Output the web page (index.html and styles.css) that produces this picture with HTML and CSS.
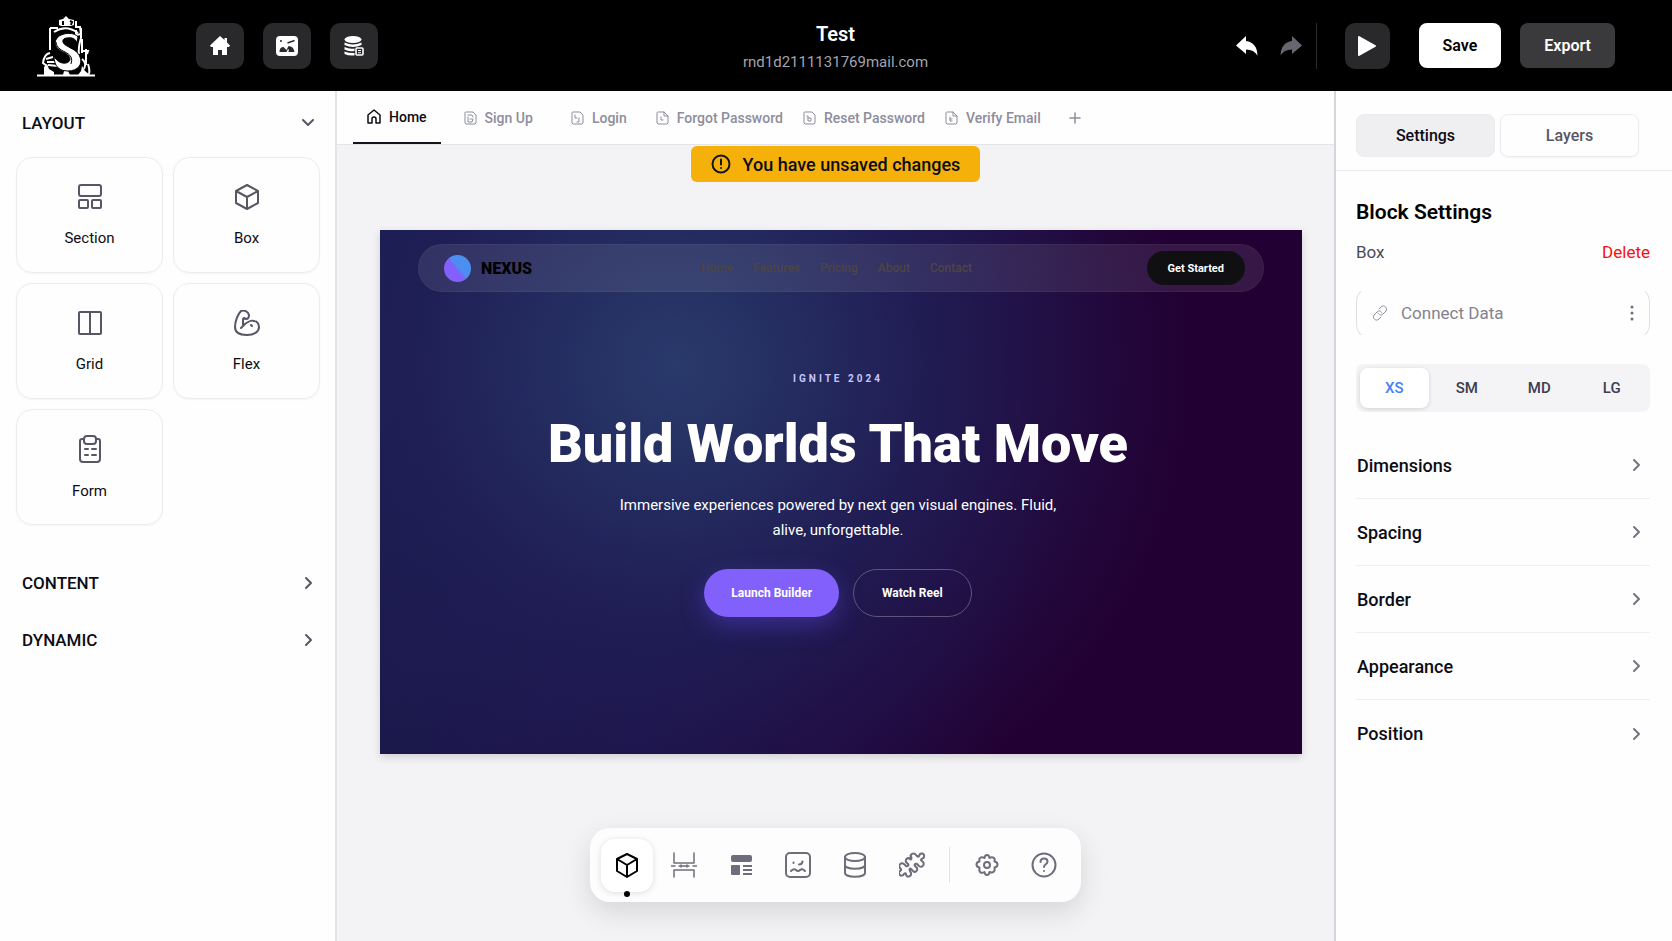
FILE: index.html
```html
<!DOCTYPE html>
<html lang="en">
<head>
  <meta charset="UTF-8">
  <meta name="viewport" content="width=device-width, initial-scale=1">
  <title>Test - Site Builder</title>
  <link rel="stylesheet" href="styles.css">
</head>
<body>
  <header class="topbar">
    <div class="topbar-left">
      <a class="logo" href="#" aria-label="Dashboard">
        <svg width="60" height="62" viewBox="0 0 60 62" fill="none" stroke="#fff" stroke-width="2">
          <path d="M1 60.500h58" stroke-width="2"/>
          <path d="M8 60v-8l3-3 2 5 5 3v3zM27 60l1-4h4l2 4zM42 60l3-4 1-5 3 5 5 4z" fill="#fff" stroke="none"/>
          <path d="M23 10V5l4-1 3-3 3 3 5 1v5l-3 1H25z" fill="#fff" stroke="none"/>
          <path d="M27 6v4M34 6l2 1-1 3" stroke="#000" stroke-width="2"/>
          <path d="M14 13h8M14 13v22M40 12h4l1 7-5 1v-5M40 6v7M45 13v10M18 17q12-8 24 1M46 24v14M50 34v16M47 36h5l-1 3" stroke-width="2"/>
          <path d="M45 23q-3 10-2 16M14 38q-6 1-7 10l4 3M17 42l-7 2M20 47l-9 0M22 51l-10-1M52 49q2 6 1 10M46 44q5 4 2 10"/>
          <path d="M42 22c-3-5-16-5-21 1-5 7 1 12 8 15 7 4 6 9 1 10-6 1-10-3-12-7 0 11 6 15 14 15 10 0 15-7 12-14-2-6-8-8-13-11-6-3-5-8 0-8 5-1 9 1 10 5z" fill="#fff" stroke="#000" stroke-width="1"/>
          <path d="M20 27q0 6 9 10 9 4 6 12" stroke="#000" stroke-width="1"/>
        </svg>
      </a>
      <nav class="quick-links">
        <button class="square-btn" type="button" aria-label="Home">
          <svg width="20" height="20" viewBox="0 0 20 20" fill="#fff">
            <path d="M10 0L0 9.500l1 1.500h2v8h5v-5h4v5h5v-8h2l1-1.500-3-3V2h-2.500v2z"/>
          </svg>
        </button>
        <button class="square-btn" type="button" aria-label="Images">
          <svg width="22" height="20" viewBox="0 0 22 20" fill="none" stroke="#fff" stroke-width="2">
            <rect x="1" y="1" width="20" height="18" rx="3" fill="#fff"/>
            <path d="M3.500 16q0-5 4-5l3 3 2-4q5 0 6 6z" fill="#29292b" stroke="none"/>
            <path d="M11.500 7l7-2.500" stroke="#29292b" stroke-width="1.500"/>
            <path d="M10 17l2-4 1 1-1 3z" fill="#fff" stroke="none"/>
            <circle cx="5" cy="5" r="1" fill="#29292b" stroke="none"/>
          </svg>
        </button>
        <button class="square-btn" type="button" aria-label="Database">
          <svg width="20" height="20" viewBox="0 0 20 20" fill="#fff">
            <ellipse cx="9" cy="3.500" rx="8.500" ry="3.500"/>
            <path d="M.5 6.500q8.500 4 17 0V9q-8.500 4-17 0zM.5 11q5 2.500 10 1.500V15Q5 16 .5 13.500zM.5 15.500q5 2 10 1.500v2.500q-6 .5-10-1.500z"/>
            <rect x="12" y="12" width="7" height="7" rx="1" fill="none" stroke="#fff" stroke-width="1.600"/>
            <path d="M14 14h3v1h-3zM14 16.300h3v1h-3z"/>
          </svg>
        </button>
      </nav>
    </div>

    <div class="project">
      <h1 class="project-name">Test</h1>
      <p class="project-mail">rnd1d2111131769mail.com</p>
    </div>

    <div class="topbar-right">
      <div class="history">
        <button class="icon-btn" type="button" aria-label="Undo">
          <svg width="22" height="20" viewBox="0 0 22 20" fill="#fff"><path d="M0 9.500L10 0v5q11 1.500 11.500 14.500Q18 13.500 10 13.500V18z"/></svg>
        </button>
        <button class="icon-btn" type="button" aria-label="Redo">
          <svg width="22" height="20" viewBox="0 0 22 20" fill="#66666f"><path d="M22 9.500L12 0v5Q1 6.500.5 19.500 4 13.500 12 13.500V18z"/></svg>
        </button>
      </div>
      <button class="play-btn" type="button" aria-label="Preview">
        <svg width="20" height="22" viewBox="0 0 20 22" fill="#fff" stroke="#fff" stroke-width="2" stroke-linejoin="round"><path d="M2 2l16 9-16 9z"/></svg>
      </button>
      <button class="action-btn action-save" type="button">Save</button>
      <button class="action-btn action-export" type="button">Export</button>
    </div>
  </header>

  <div class="workspace">
    <aside class="sidebar">
      <button class="group-head" type="button" aria-expanded="true">
        LAYOUT
        <svg width="14" height="14" viewBox="0 0 14 14" class="line-icon"><path d="M2 4l5 5 5-5"/></svg>
      </button>
      <div class="block-grid">
        <button class="block" type="button">
          <svg width="26" height="26" viewBox="0 0 26 26" class="line-icon"><rect x="2" y="1" width="22" height="11" rx="2"/><rect x="2" y="16" width="9" height="8" rx="1"/><rect x="15" y="16" width="9" height="8" rx="1"/></svg>
          Section
        </button>
        <button class="block" type="button">
          <svg width="26" height="26" viewBox="0 0 26 26" class="line-icon"><path d="M13 1l11 6v12l-11 6-11-6V7zM2 7l11 6 11-6M13 13v12"/></svg>
          Box
        </button>
        <button class="block" type="button">
          <svg width="26" height="26" viewBox="0 0 26 26" class="line-icon"><rect x="2" y="2" width="22" height="22" rx="1"/><path d="M13 2v22"/></svg>
          Grid
        </button>
        <button class="block" type="button">
          <svg width="26" height="26" viewBox="0 0 26 26" class="line-icon"><path d="M7 18l4-4c4-3 7-4 9-3 3 0 5 3 5 6 0 5-5 8-12 8-6 0-12-2-12-8C1 11 4 4 7 1c3-1 7 0 8 4 0 2-1 4-3 4l-2-1-1 1v6M17 15l1 1"/></svg>
          Flex
        </button>
        <button class="block" type="button">
          <svg width="26" height="28" viewBox="0 0 26 28" class="line-icon"><path d="M7 4H5a2 2 0 0 0-2 2v18a3 3 0 0 0 3 3h14a3 3 0 0 0 3-3V6a2 2 0 0 0-2-2h-2"/><rect x="7" y="1" width="12" height="8" rx="3"/><path d="M8 14h3M15 14h4M8 20h3M15 20h4"/></svg>
          Form
        </button>
      </div>
      <button class="group-head group-closed" type="button" aria-expanded="false">
        CONTENT
        <svg width="14" height="14" viewBox="0 0 14 14" class="line-icon"><path d="M5 2l5 5-5 5"/></svg>
      </button>
      <button class="group-head group-closed" type="button" aria-expanded="false">
        DYNAMIC
        <svg width="14" height="14" viewBox="0 0 14 14" class="line-icon"><path d="M5 2l5 5-5 5"/></svg>
      </button>
    </aside>

    <main class="stage">
      <nav class="page-tabs">
        <a class="page-tab page-tab-active" href="#">
          <svg width="14" height="15" viewBox="0 0 14 15" class="line-icon"><path d="M1 6l6-5 6 5v8H9v-4a2 2 0 0 0-4 0v4H1z"/></svg>
          Home
        </a>
        <a class="page-tab page-tab-wide" href="#">
          <svg width="13" height="14" viewBox="0 0 13 14" class="file-icon"><path d="M2 1h7l3 3v8l-1 1H2l-1-1V2zM4 4h4l1 2M4 6v5h4l1-3H6"/></svg>
          Sign Up
        </a>
        <a class="page-tab page-tab-wide" href="#">
          <svg width="13" height="14" viewBox="0 0 13 14" class="file-icon"><path d="M2 1h7l3 3v8l-1 1H2l-1-1V2zM4 4v3h2M8 7v4H6"/></svg>
          Login
        </a>
        <a class="page-tab" href="#">
          <svg width="13" height="14" viewBox="0 0 13 14" class="file-icon"><path d="M2 1h6l4 4v7l-1 1H2l-1-1V2zM8 1v4h4M5 6v3h2"/></svg>
          Forgot Password
        </a>
        <a class="page-tab" href="#">
          <svg width="13" height="14" viewBox="0 0 13 14" class="file-icon"><path d="M2 1h7l3 3v8l-1 1H2l-1-1V2zM4 5h1v5h3V7H5"/></svg>
          Reset Password
        </a>
        <a class="page-tab" href="#">
          <svg width="13" height="14" viewBox="0 0 13 14" class="file-icon"><path d="M2 1h6l4 4v7l-1 1H2l-1-1V2zM8 1v4h4M5 6v4h2M5 8h2"/></svg>
          Verify Email
        </a>
        <button class="add-page" type="button" aria-label="Add page">
          <svg width="12" height="12" viewBox="0 0 12 12" class="line-icon"><path d="M6 1v10M1 6h10"/></svg>
        </button>
      </nav>

      <div class="canvas">
        <div class="notice" role="status">
          <svg width="20" height="20" viewBox="0 0 20 20" class="line-icon"><circle cx="10" cy="10" r="8.500"/><path d="M10 5.500v5M10 14v.1"/></svg>
          You have unsaved changes
        </div>

        <section class="hero">
          <div class="hero-nav">
            <div class="brand"><span class="brand-mark"></span>NEXUS</div>
            <nav class="hero-links">
              <a href="#">Home</a>
              <a href="#">Features</a>
              <a href="#">Pricing</a>
              <a href="#">About</a>
              <a href="#">Contact</a>
            </nav>
            <button class="hero-cta" type="button">Get Started</button>
          </div>
          <div class="hero-body">
            <p class="eyebrow">IGNITE 2024</p>
            <h2 class="headline">Build Worlds That Move</h2>
            <p class="lead">Immersive experiences powered by next gen visual engines. Fluid, alive, unforgettable.</p>
            <div class="hero-actions">
              <button class="pill pill-primary" type="button">Launch Builder</button>
              <button class="pill pill-outline" type="button">Watch Reel</button>
            </div>
          </div>
        </section>

        <div class="dock">
          <button class="dock-btn dock-btn-active" type="button" aria-label="Blocks">
            <svg width="26" height="26" viewBox="0 0 26 26" class="line-icon"><path d="M13 2l10 5v12l-10 6-10-6V7zM3 7l10 6 10-6M13 13v12"/></svg>
          </button>
          <button class="dock-btn" type="button" aria-label="Spacing">
            <svg width="26" height="26" viewBox="0 0 26 26" class="line-icon thin"><path d="M3 1v10h20V1M3 25v-7h20v7M0 14h4M8 14h10M22 14h4M10 13v2M16 13v2"/></svg>
          </button>
          <button class="dock-btn" type="button" aria-label="Templates">
            <svg width="26" height="26" viewBox="0 0 26 26" fill="#6d6d7c"><rect x="3" y="3" width="21" height="7" rx="2"/><rect x="3" y="13" width="9" height="10" rx="1"/><path d="M15 13h9v2h-9zM15 17h9v2h-9zM15 21h9v2h-9z"/></svg>
          </button>
          <button class="dock-btn" type="button" aria-label="Media">
            <svg width="26" height="26" viewBox="0 0 26 26" class="line-icon"><rect x="1" y="1" width="24" height="24" rx="4"/><path d="M6 19q3-3 5-1t4 0 5 1M14 12.500q3 0 3.500-3M8.500 10.500v.5"/></svg>
          </button>
          <button class="dock-btn" type="button" aria-label="Data">
            <svg width="26" height="26" viewBox="0 0 26 26" class="line-icon"><ellipse cx="13" cy="5" rx="10" ry="4"/><path d="M3 5v16c0 5 20 5 20 0V5M3 13c0 5 20 5 20 0"/></svg>
          </button>
          <button class="dock-btn" type="button" aria-label="Plugins">
            <svg width="26" height="26" viewBox="0 0 26 26" class="line-icon"><path d="M12 6c-2-4 3-6 5-3l1 1c1 1 2 1 2 0 1-4 6-3 5 1 0 2-3 1-3 3l2 2c2 3-1 6-4 4l-2-2c-2-1-3 1-2 2l2 2c1 3-2 5-4 3l-2-2c-1-1-2 0-1 2l1 2c1 4-5 5-5 1 0-1-1-1-2 0-2 4-7 0-4-3 2-1 1-2 0-3-2-3 1-6 4-4l2 2c2 1 3-1 2-2l-2-2c-1-3 2-5 4-3 1 1 2 0 1-3z"/></svg>
          </button>
          <span class="dock-divider"></span>
          <button class="dock-btn" type="button" aria-label="Settings">
            <svg width="26" height="26" viewBox="0 0 26 26" class="line-icon"><path d="M10.500 6c.5-4 4.500-4 5 0 3-2 6 0 5 3.500 4 .5 4 5.500 0 6 1 4-1.500 6-5 4.500-.5 4-4.500 4-5 0-3.500 2-6 0-5-4.500-4-.5-4-5.500 0-6C4.500 6 7 4 10.500 6z"/><circle cx="13" cy="13" r="3"/></svg>
          </button>
          <button class="dock-btn" type="button" aria-label="Help">
            <svg width="26" height="26" viewBox="0 0 26 26" class="line-icon"><circle cx="13" cy="13" r="11.500"/><path d="M9.500 10c0-5 7-4.500 7-.5 0 3-3.500 2.500-3.500 5.500M13 19v.1"/></svg>
          </button>
        </div>
      </div>
    </main>

    <aside class="inspector">
      <div class="inspector-tabs">
        <button class="inspector-tab inspector-tab-active" type="button">Settings</button>
        <button class="inspector-tab" type="button">Layers</button>
      </div>
      <div class="inspector-body">
        <h2 class="panel-title">Block Settings</h2>
        <div class="block-row">
          <span>Box</span>
          <button class="delete-btn" type="button">Delete</button>
        </div>
        <button class="connect" type="button">
          <svg width="16" height="16" viewBox="0 0 16 16" class="file-icon"><path d="M7 4l2-2c3-3 7 1 5 4l-3 3c-2 2-4 1-5-1M9 12l-2 2c-3 3-7-1-5-4l3-3c2-2 4-1 5 1"/></svg>
          <span class="connect-label">Connect Data</span>
          <svg width="4" height="16" viewBox="0 0 4 16" fill="#6d6d7c"><circle cx="2" cy="2" r="1.500"/><circle cx="2" cy="8" r="1.500"/><circle cx="2" cy="14" r="1.500"/></svg>
        </button>
        <div class="sizes">
          <button class="size size-active" type="button">XS</button>
          <button class="size" type="button">SM</button>
          <button class="size" type="button">MD</button>
          <button class="size" type="button">LG</button>
        </div>
        <div class="props">
          <button class="prop" type="button">Dimensions <svg width="14" height="14" viewBox="0 0 14 14" class="line-icon"><path d="M4 2l5 5-5 5"/></svg></button>
          <button class="prop" type="button">Spacing <svg width="14" height="14" viewBox="0 0 14 14" class="line-icon"><path d="M4 2l5 5-5 5"/></svg></button>
          <button class="prop" type="button">Border <svg width="14" height="14" viewBox="0 0 14 14" class="line-icon"><path d="M4 2l5 5-5 5"/></svg></button>
          <button class="prop" type="button">Appearance <svg width="14" height="14" viewBox="0 0 14 14" class="line-icon"><path d="M4 2l5 5-5 5"/></svg></button>
          <button class="prop" type="button">Position <svg width="14" height="14" viewBox="0 0 14 14" class="line-icon"><path d="M4 2l5 5-5 5"/></svg></button>
        </div>
      </div>
    </aside>
  </div>
</body>
</html>
```
FILE: styles.css
```css
* {
  box-sizing: border-box;
}

body {
  margin: 0;
  min-height: 100vh;
  display: flex;
  flex-direction: column;
  font-family: Roboto, "Noto Sans", sans-serif;
  font-size: 16px;
  color: #0c0c14;
  background-color: #fefefe;
}

h1, h2, p {
  margin: 0;
}

button {
  padding: 0;
  border: none;
  background: none;
  font: inherit;
  color: inherit;
  cursor: pointer;
}

a {
  color: inherit;
  text-decoration: none;
}

svg {
  display: block;
  flex-shrink: 0;
}

.line-icon,
.file-icon {
  fill: none;
  stroke: #565666;
  stroke-width: 2;
  stroke-linecap: round;
  stroke-linejoin: round;
}

.file-icon {
  stroke: #8d8d9c;
  stroke-width: 1;
}

/* top bar */

.topbar {
  display: grid;
  grid-template-columns: 1fr auto 1fr;
  align-items: center;
  height: 91px;
  padding: 0 57px 0 36px;
  background-color: #000;
  color: #fff;
}

.topbar-left,
.topbar-right,
.quick-links,
.history {
  display: flex;
  align-items: center;
}

.topbar-left {
  gap: 100px;
}

.quick-links {
  gap: 19px;
}

.square-btn,
.play-btn {
  display: flex;
  align-items: center;
  justify-content: center;
  width: 48px;
  height: 46px;
  border-radius: 10px;
  background-color: #29292b;
}

.play-btn {
  width: 45px;
  margin-left: 28px;
}

.project {
  padding: 4px 0 0 20px;
  text-align: center;
}

.project-name {
  font-size: 20px;
  line-height: 28px;
  font-weight: 600;
}

.project-mail {
  font-size: 15px;
  line-height: 28px;
  color: #a4a4ae;
}

.topbar-right {
  justify-content: flex-end;
}

.history {
  gap: 22px;
  height: 46px;
  padding-right: 14px;
  border-right: 1px solid #2c2c2e;
}

.action-btn {
  height: 45px;
  padding: 0 24px;
  border-radius: 8px;
  font-weight: 600;
}

.action-save {
  margin-left: 29px;
  background-color: #fff;
  color: #000;
}

.action-export {
  margin-left: 19px;
  background-color: #3a3a3c;
}

/* panels */

.workspace {
  flex: 1;
  display: grid;
  grid-template-columns: 337px 1fr 338px;
}

.sidebar {
  padding: 0 15px 0 16px;
  border-right: 2px solid #e4e4e7;
}

.group-head {
  display: flex;
  align-items: center;
  justify-content: space-between;
  width: 100%;
  height: 66px;
  padding: 0 5px 2px 6px;
  font-size: 17px;
  font-weight: 500;
}

.group-closed {
  height: 57px;
}

.block-grid {
  display: grid;
  grid-template-columns: 1fr 1fr;
  gap: 10px;
  margin-bottom: 30px;
}

.block {
  display: flex;
  flex-direction: column;
  align-items: center;
  justify-content: center;
  gap: 19px;
  height: 116px;
  border: 1px solid #ececef;
  border-radius: 16px;
  box-shadow: 0 1px 2px rgba(0, 0, 0, 0.04);
  font-size: 15px;
}

/* stage */

.stage {
  display: flex;
  flex-direction: column;
  min-width: 0;
}

.page-tabs {
  display: flex;
  height: 54px;
  padding-left: 16px;
  border-bottom: 1px solid #e4e4e9;
  font-size: 14px;
  font-weight: 500;
  color: #8d8d9c;
}

.page-tab {
  display: flex;
  align-items: center;
  gap: 8px;
  padding: 0 10px;
}

.page-tab-wide {
  padding: 0 19px;
}

.page-tab-active {
  margin-right: 4px;
  padding: 0 14px;
  border-bottom: 2px solid #14141c;
  color: #0c0c14;
}

.page-tab-active .line-icon {
  stroke: #0c0c14;
  stroke-width: 1.5;
}

.add-page {
  padding: 0 18px;
}

.add-page .line-icon {
  stroke: #8d8d9c;
  stroke-width: 1.5;
}

.canvas {
  flex: 1;
  display: flex;
  flex-direction: column;
  align-items: center;
  padding: 1px 32px 39px;
  background-color: #f3f3f6;
}

.notice {
  display: flex;
  align-items: center;
  gap: 12px;
  height: 36px;
  margin-bottom: 48px;
  padding: 0 20px;
  border-radius: 6px;
  background-color: #f5b10a;
  font-size: 18px;
  font-weight: 500;
}

.notice .line-icon {
  stroke: #14141c;
}

.hero {
  align-self: stretch;
  aspect-ratio: 922 / 524;
  margin-left: 11px;
  padding: 14px 38px;
  background:
    radial-gradient(ellipse 56% 95% at 32% 26%, #293a6b 0%, rgba(32, 33, 88, 0.8) 50%, rgba(34, 0, 50, 0) 100%),
    linear-gradient(100deg, #191a4c 0%, #1e0f48 36%, #230033 70%);
  box-shadow: 0 3px 8px rgba(0, 0, 0, 0.15);
  color: #fff;
}

.hero-nav {
  display: grid;
  grid-template-columns: 1fr auto 1fr;
  align-items: center;
  height: 48px;
  padding: 0 18px 0 25px;
  border: 1px solid rgba(255, 255, 255, 0.04);
  border-radius: 24px;
  background-color: rgba(255, 255, 255, 0.09);
}

.brand {
  display: flex;
  align-items: center;
  gap: 10px;
  font-size: 16px;
  font-weight: 900;
  color: #000;
}

.brand-mark {
  width: 27px;
  height: 27px;
  border-radius: 50%;
  background: linear-gradient(50deg, #8360fb 45%, #4b90f0 55%);
}

.hero-links {
  display: flex;
  gap: 20px;
  padding-right: 16px;
  font-size: 12px;
  font-weight: 500;
  color: #4d4544;
}

.hero-cta {
  justify-self: end;
  height: 34px;
  padding: 0 21px;
  border-radius: 17px;
  background-color: #101012;
  font-size: 11px;
  font-weight: 700;
}

.hero-body {
  display: flex;
  flex-direction: column;
  align-items: center;
  padding: 79px 6px 0 0;
  text-align: center;
}

.eyebrow {
  font-size: 10px;
  line-height: 16px;
  font-weight: 700;
  letter-spacing: 3px;
  color: #c9c5fb;
}

.headline {
  margin-top: 23px;
  font-size: 54px;
  line-height: 68px;
  font-weight: 900;
}

.lead {
  max-width: 460px;
  margin-top: 15px;
  font-size: 15px;
  line-height: 25px;
}

.hero-actions {
  display: flex;
  gap: 14px;
  margin-top: 26px;
}

.pill {
  height: 48px;
  padding: 0 27px;
  border-radius: 24px;
  font-size: 12px;
  font-weight: 700;
}

.pill-primary {
  background-color: #8260fb;
  box-shadow: 0 8px 24px rgba(100, 75, 240, 0.4);
}

.pill-outline {
  padding: 0 28px;
  border: 1px solid #5d5578;
}

/* dock */

.dock {
  display: flex;
  align-items: center;
  gap: 5px;
  height: 74px;
  margin-top: auto;
  padding: 0 11px;
  border-radius: 20px;
  background-color: #fdfdfe;
  box-shadow: 0 10px 28px rgba(0, 0, 0, 0.12);
}

.dock-btn {
  position: relative;
  display: flex;
  align-items: center;
  justify-content: center;
  width: 52px;
  height: 53px;
  border-radius: 14px;
}

.dock-btn .line-icon {
  stroke: #6d6d7c;
}

.dock-btn-active {
  background-color: #fff;
  box-shadow: 0 1px 6px rgba(0, 0, 0, 0.13);
}

.dock-btn-active .line-icon {
  stroke: #000;
}

.dock-btn-active::after {
  content: "";
  position: absolute;
  bottom: -5px;
  width: 6px;
  height: 6px;
  border-radius: 50%;
  background-color: #000;
}

.dock-btn .thin {
  stroke-width: 1.5;
}

.dock-divider {
  width: 1px;
  height: 36px;
  margin: 0 6px;
  background-color: #e3e3e8;
}

/* inspector */

.inspector {
  border-left: 2px solid #d6d6da;
}

.inspector-tabs {
  display: flex;
  gap: 5px;
  height: 80px;
  padding: 23px 33px 13px 20px;
  border-bottom: 1px solid #ececef;
}

.inspector-tab {
  flex: 1;
  border: 1px solid #ececef;
  border-radius: 8px;
  box-shadow: 0 1px 2px rgba(0, 0, 0, 0.05);
  font-weight: 500;
  color: #565666;
}

.inspector-tab-active {
  background-color: #efeff1;
  box-shadow: none;
  color: #0c0c14;
}

.inspector-body {
  padding: 27px 22px 0 20px;
}

.panel-title {
  font-size: 21px;
  line-height: 28px;
  font-weight: 600;
  color: #000;
}

.block-row {
  display: flex;
  align-items: center;
  justify-content: space-between;
  height: 28px;
  margin-top: 12px;
  font-size: 17px;
  color: #4a4a58;
}

.delete-btn {
  color: #fb0d0d;
}

.connect {
  display: flex;
  align-items: center;
  gap: 13px;
  width: 100%;
  height: 54px;
  margin-top: 20px;
  padding: 0 15px;
  border: 1px solid #e0e0e4;
  border-top-color: transparent;
  border-bottom-color: transparent;
  border-radius: 16px;
  font-size: 17px;
  color: #828290;
}

.connect-label {
  flex: 1;
  text-align: left;
}

.sizes {
  display: grid;
  grid-template-columns: repeat(4, 1fr);
  gap: 4px;
  height: 48px;
  margin-top: 24px;
  padding: 4px;
  border-radius: 8px;
  background-color: #f4f4f6;
}

.size {
  border-radius: 8px;
  font-size: 15px;
  font-weight: 500;
  color: #3e3e4c;
}

.size-active {
  background-color: #fff;
  box-shadow: 0 1px 4px rgba(0, 0, 0, 0.14);
  color: #4583f5;
}

.props {
  margin-top: 20px;
}

.prop {
  display: flex;
  align-items: center;
  justify-content: space-between;
  width: 100%;
  height: 67px;
  padding: 0 6px 0 1px;
  border-bottom: 1px solid #f0f0f2;
  font-size: 18px;
  font-weight: 500;
}

.prop .line-icon {
  stroke: #747482;
}

.prop:last-child {
  border-bottom: none;
}
```
